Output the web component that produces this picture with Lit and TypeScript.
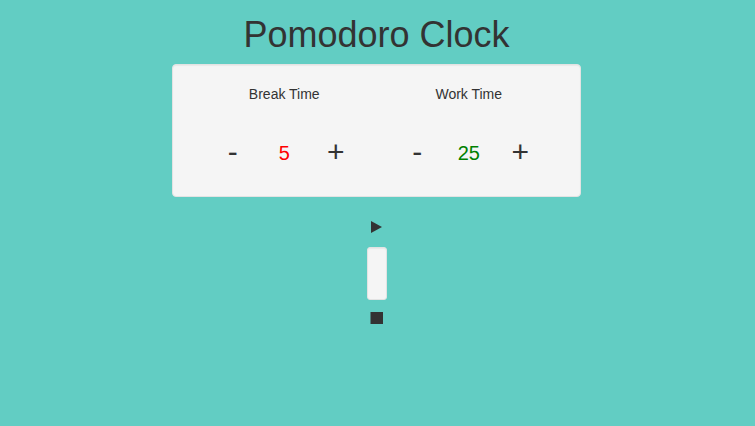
import { LitElement, html, css } from "lit";
import { customElement, state } from "lit/decorators.js";

@customElement("app-root")
export class AppRoot extends LitElement {
  static styles = css`
    :host {
      display: block;
      min-height: 100vh;
      background: #62cdc3;
      color: #333;
      font: 14px/20px "Liberation Sans", Arial, sans-serif;
    }
    * {
      box-sizing: border-box;
    }
    main {
      display: flex;
      flex-direction: column;
      align-items: center;
      padding: 15px 2px 20px 0;
    }
    h1 {
      margin: 0 0 9px;
      font-size: 36px;
      line-height: 40px;
      font-weight: 400;
    }
    .well {
      background: #f5f5f5;
      border: 1px solid #e3e3e3;
      border-radius: 4px;
      box-shadow: inset 0 1px 1px rgba(0, 0, 0, 0.05);
    }
    .settings {
      display: grid;
      grid-template-columns: 1fr 1fr;
      width: 100%;
      max-width: 409px;
      padding: 19px;
    }
    .setting {
      padding: 0 15px;
      text-align: center;
    }
    .label {
      margin: 0 0 28px;
    }
    .stepper {
      display: grid;
      grid-template-columns: 1fr 1fr 1fr;
      align-items: start;
      height: 45px;
    }
    button {
      display: block;
      margin: 0;
      padding: 0;
      border: 0;
      background: none;
      color: inherit;
      font: inherit;
      cursor: pointer;
    }
    .step {
      font-size: 30px;
      line-height: 40px;
    }
    .value {
      font-size: 20px;
      line-height: 42px;
    }
    .break {
      color: red;
    }
    .work {
      color: green;
    }
    .control {
      width: 20px;
      height: 20px;
    }
    .control svg {
      display: block;
      fill: #333;
    }
    .play {
      margin-top: 20px;
    }
    .display {
      width: 20px;
      height: 53px;
      margin: 10px 0 8px;
      border-radius: 3px;
    }
  `;

  @state() private breakTime = 5;
  @state() private workTime = 25;

  private renderSetting(
    label: string,
    kind: string,
    value: number,
    change: (step: number) => void
  ) {
    return html`
      <section class="setting" aria-label=${label}>
        <p class="label">${label}</p>
        <div class="stepper">
          <button class="step" aria-label="Decrease ${label}" @click=${() => change(-1)}>-</button>
          <span class="value ${kind}">${value}</span>
          <button class="step" aria-label="Increase ${label}" @click=${() => change(1)}>+</button>
        </div>
      </section>
    `;
  }

  render() {
    return html`
      <main>
        <h1>Pomodoro Clock</h1>
        <div class="well settings">
          ${this.renderSetting("Break Time", "break", this.breakTime, (step) => {
            this.breakTime = Math.max(1, this.breakTime + step);
          })}
          ${this.renderSetting("Work Time", "work", this.workTime, (step) => {
            this.workTime = Math.max(1, this.workTime + step);
          })}
        </div>
        <button class="control play" aria-label="Start">
          <svg width="20" height="20" viewBox="0 0 20 20"><path d="M4 4L15 10L4 16Z" /></svg>
        </button>
        <div class="well display" role="timer"></div>
        <button class="control" aria-label="Stop">
          <svg width="20" height="20" viewBox="0 0 20 20"><path d="M3.5 4H16V16H3.5Z" /></svg>
        </button>
      </main>
    `;
  }
}
